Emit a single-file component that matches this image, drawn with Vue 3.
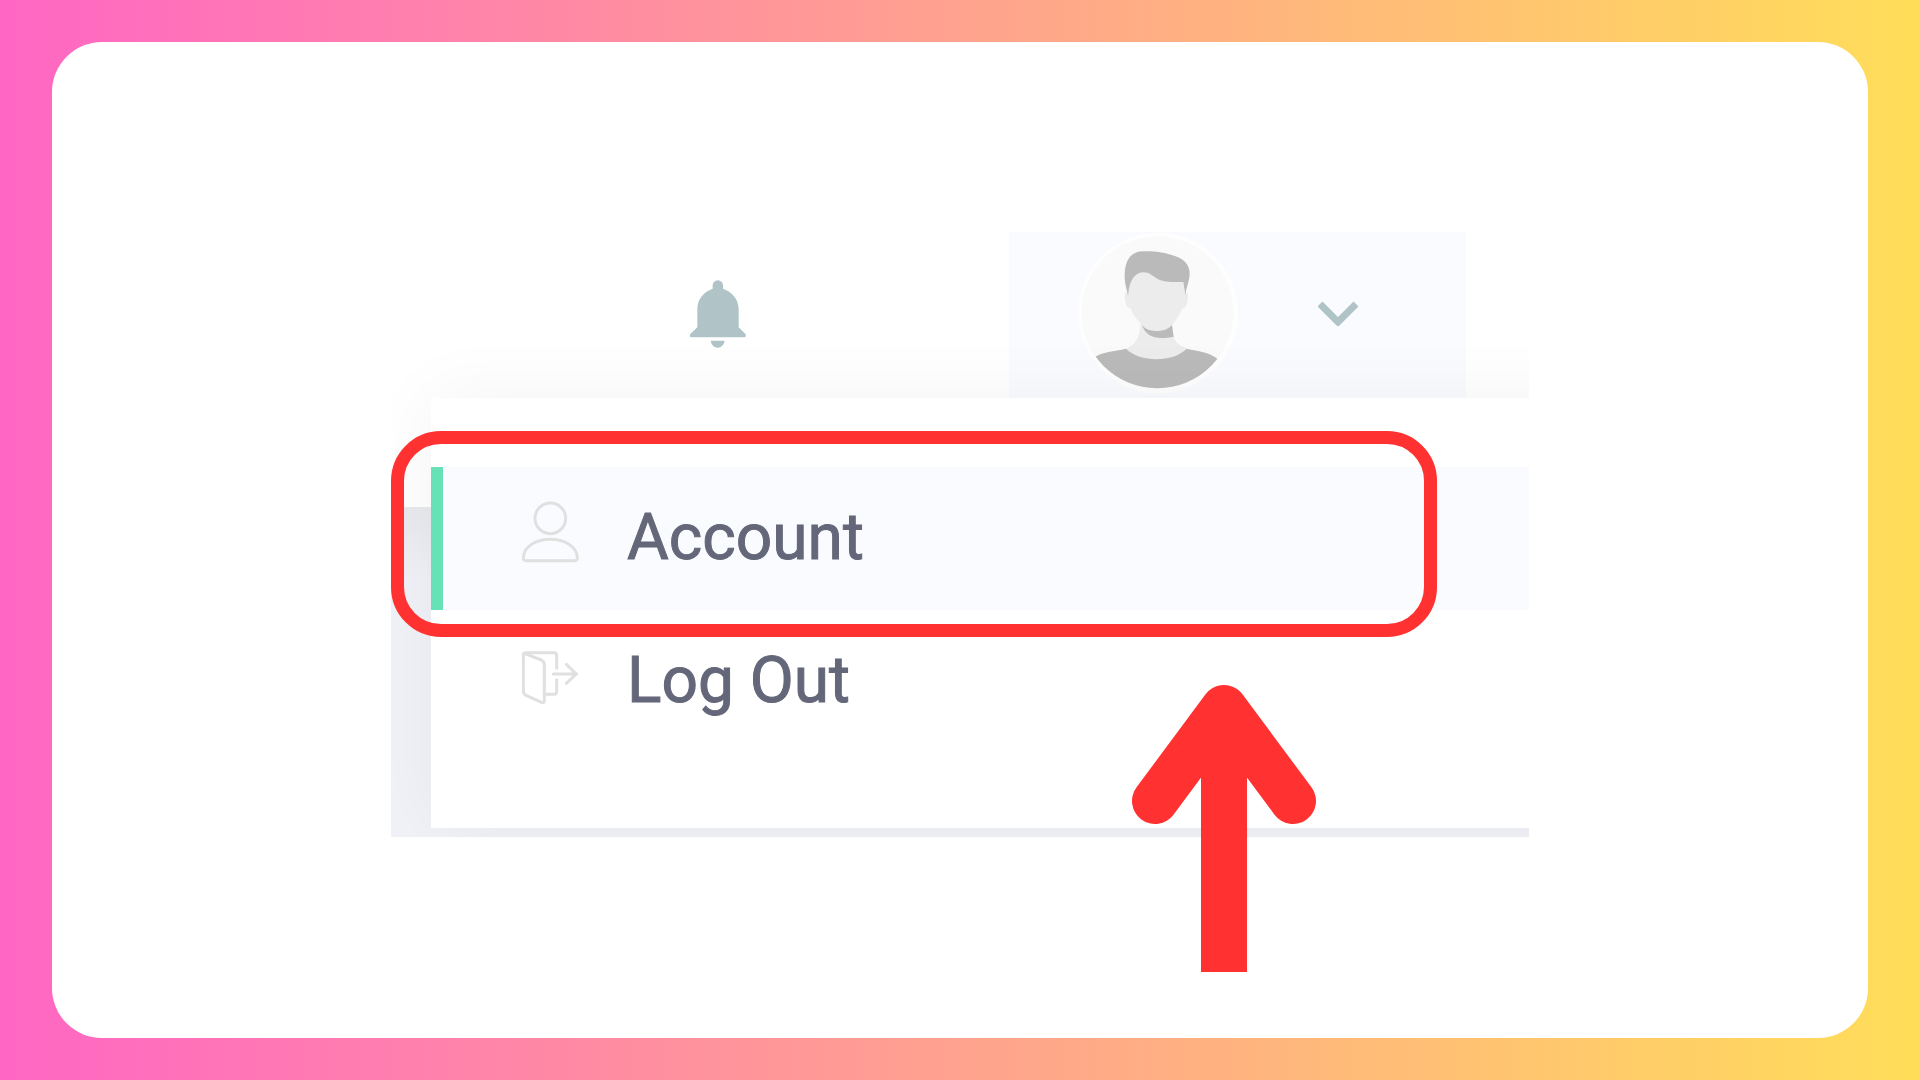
<template>
  <main class="frame">
    <div class="card">
      <div class="stage">
        <div class="capture">
          <header class="topbar">
            <button class="bell" type="button" aria-label="Notifications">
              <svg viewBox="90 60 168 204" width="56" height="68">
                <path
                  fill="#b0c4c8"
                  d="M158 76a15 15 0 0 1 31 0v10c29 10 47 33 47 62v54l21 21q2 9-4 9H94q-6 0-4-9l22-21v-54c0-29 17-52 46-62zM152 242h42c-2 12-10 21-21 21s-19-9-21-21z"
                />
              </svg>
            </button>
            <button class="profile" type="button" aria-label="Profile menu">
              <svg class="avatar" viewBox="54 39 480 480" width="160" height="160">
                <defs>
                  <clipPath id="avatar-clip"><circle cx="292" cy="277" r="228" /></clipPath>
                </defs>
                <circle cx="294" cy="279" r="240" fill="#fefefe" />
                <circle cx="292" cy="277" r="228" fill="#fafafa" />
                <g clip-path="url(#avatar-clip)">
                  <path
                    fill="#ececec"
                    d="M242 300c0 48-14 74-43 86l-10 20 100 30 102-30-10-20c-30-12-41-28-42-44l-3-40z"
                  />
                  <path fill="#bababa" d="M245 312l90-2 6 40c-48 8-82 6-96-38z" />
                  <path
                    fill="#ececec"
                    d="M203 216c2-38 12-62 36-66l130 30 5 38c10-2 12 8 9 22-3 18-8 26-16 25-9 21-19 36-31 50-16 17-32 18-48 18-24 0-37-9-49-26-13-14-21-26-28-43-9 1-14-10-16-25-2-14 0-24 8-23z"
                  />
                  <path
                    fill="#bababa"
                    d="M204 228c-2-20-11-32-10-66 2-42 18-68 56-68 32-1 62 3 82 10 36 8 57 28 57 56-1 26-9 38-13 66l-6-40c-32 1-60 0-78-10-16-8-22-19-42-19-30 2-42 28-46 71z"
                  />
                  <path
                    fill="#bababa"
                    d="M104 412c22-17 58-18 94-26 42 42 140 42 182 0 36 8 66 10 92 30l-30 100H134z"
                  />
                </g>
              </svg>
              <svg viewBox="0 0 40 26" width="40" height="26">
                <path d="M2 4l18 18L38 4" fill="none" stroke="#b0c4c8" stroke-width="7" />
              </svg>
            </button>
          </header>

          <nav class="menu">
            <a
              v-for="item in items"
              :key="item.label"
              href="#"
              class="item"
              :class="{ active: item.active }"
            >
              <svg class="icon" :viewBox="item.viewBox" width="57" height="72">
                <path v-for="d in item.paths" :key="d" :d="d" />
              </svg>
              <span>{{ item.label }}</span>
            </a>
          </nav>
        </div>

        <div class="highlight"></div>
        <svg class="arrow" viewBox="0 0 184 287" width="184" height="287">
          <path d="M23 116L92 23l69 93" stroke-linecap="round" stroke-linejoin="round" />
          <path d="M92 287V40" />
        </svg>
      </div>
    </div>
  </main>
</template>

<script setup>
const items = [
  {
    label: "Account",
    active: true,
    viewBox: "66 62 171 216",
    paths: [
      "M151 68a46 46 0 1 1 0 92a46 46 0 1 1 0-92z",
      "M78 241q-9 0-8-10c3-34 40-54 81-54s78 20 81 54q1 10-8 10z",
    ],
  },
  {
    label: "Log Out",
    active: false,
    viewBox: "66 490 171 216",
    paths: [
      "M73 518L124 538q9 4 9 12V660q0 8-8 5L78 644q-8-4-8-12V524q0-8 8-8H162q8 0 8 8V563",
      "M170 597V632q0 9-8 9H134",
      "M160 580H230M199 551l30 29l-30 28",
    ],
  },
];
</script>

<style>
body {
  margin: 0;
}
</style>

<style scoped>
.frame {
  display: flex;
  box-sizing: border-box;
  min-height: 100vh;
  padding: 42px 52px;
  background: linear-gradient(90deg, #ff66c4, #ffde59);
  font-family: Roboto, "Liberation Sans", sans-serif;
}

.card {
  display: flex;
  flex: 1;
  align-items: center;
  justify-content: center;
  padding-bottom: 12px;
  border-radius: 50px;
  background: #fff;
}

.stage {
  position: relative;
  width: 100%;
  max-width: 1138px;
}

.capture {
  overflow: hidden;
  background:
    linear-gradient(#fff 275px, transparent 275px),
    linear-gradient(transparent 275px, #e8e9ed 275px, #f0f2f7 350px);
}

.topbar {
  display: flex;
  justify-content: flex-end;
  height: 166px;
  padding-right: 63px;
}

button {
  display: flex;
  align-items: center;
  margin: 0;
  padding: 0;
  border: 0;
  background: none;
  cursor: pointer;
}

.bell {
  margin-right: 263px;
  padding-bottom: 2px;
}

.profile {
  gap: 80px;
  padding: 0 108px 4px 69px;
  background: #fafbff;
}

/* runs past the right edge so the shadow stays even there */
.menu {
  position: relative;
  margin: 0 -80px 9px 40px;
  padding: 69px 0 75px;
  background: #fff;
  box-shadow: 0 0 70px rgba(0, 0, 0, 0.05);
}

.item {
  display: flex;
  align-items: center;
  gap: 48px;
  box-sizing: border-box;
  height: 143px;
  padding: 0 0 2px 79px;
  border-left: 12px solid transparent;
  color: #646779;
  font-size: 64px;
  text-decoration: none;
  -webkit-text-stroke: 1px #646779;
}

.item.active {
  border-left-color: #66e2b6;
  background: #fafbff;
}

.icon {
  fill: none;
  stroke: #e0e0e0;
  stroke-width: 9;
  stroke-linecap: round;
  stroke-linejoin: round;
}

.highlight {
  position: absolute;
  top: 199px;
  right: 92px;
  left: 0;
  box-sizing: border-box;
  height: 206px;
  border: 13px solid #ff3131;
  border-radius: 50px;
  pointer-events: none;
}

.arrow {
  position: absolute;
  right: 213px;
  bottom: -135px;
  fill: none;
  stroke: #ff3131;
  stroke-width: 46;
}
</style>
